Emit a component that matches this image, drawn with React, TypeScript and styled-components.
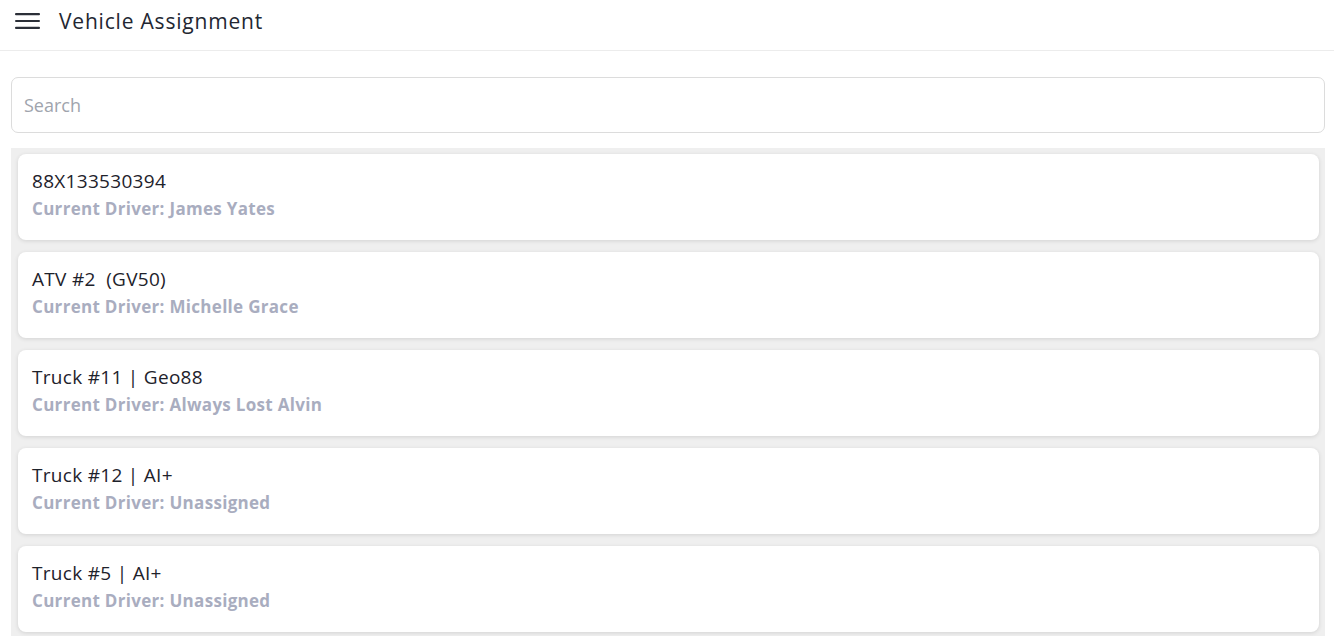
import React from "react";
import styled, { createGlobalStyle } from "styled-components";

const GlobalStyle = createGlobalStyle`
  html, body {
    margin: 0;
    padding: 0;
    background: #fff;
    font-family: 'Open Sans', 'Noto Sans', sans-serif;
  }
`;

const Page = styled.div`
  width: 1334px;
  height: 636px;
  overflow: hidden;
  background: #fff;
  display: flex;
  flex-direction: column;
`;

const Header = styled.header`
  flex-shrink: 0;
  height: 51px;
  display: flex;
  align-items: center;
  gap: 19px;
  padding: 0 15px 8px;
  border-bottom: 1px solid #ececec;
  box-sizing: border-box;
`;

const MenuButton = styled.button`
  display: flex;
  align-items: center;
  justify-content: center;
  padding: 0;
  border: none;
  background: none;
  width: 25px;
  height: 20px;
  cursor: pointer;
`;

const Title = styled.h1`
  margin: 0;
  font-size: 21px;
  font-weight: 400;
  color: #232732;
  letter-spacing: 0.8px;
`;

const Content = styled.main`
  flex-shrink: 0;
  padding: 26px 9px 0 11px;
  display: flex;
  flex-direction: column;
  gap: 15px;
`;

const SearchInput = styled.input`
  flex-shrink: 0;
  height: 56px;
  width: 100%;
  box-sizing: border-box;
  border: 1px solid #dcdcdc;
  border-radius: 7px;
  padding: 0 12px;
  font-family: inherit;
  font-size: 18px;
  color: #333;
  outline: none;
  &::placeholder {
    color: #a0a4ad;
  }
`;

const List = styled.ul`
  list-style: none;
  margin: 0;
  padding: 6px 6px 12px 7px;
  background: #efefef;
  display: flex;
  flex-direction: column;
  gap: 12px;
`;

const Card = styled.li`
  flex-shrink: 0;
  height: 86px;
  box-sizing: border-box;
  background: #fff;
  border-radius: 8px;
  box-shadow: 0 1px 4px rgba(0, 0, 0, 0.12);
  padding: 14px 14px;
  display: flex;
  flex-direction: column;
  gap: 3px;
`;

const VehicleName = styled.div`
  font-size: 19px;
  color: #1e222b;
  line-height: 27px;
  letter-spacing: 0.3px;
  white-space: pre;
`;

const DriverLine = styled.div`
  font-size: 17px;
  font-weight: 700;
  color: #a9adbf;
  line-height: 22px;
  letter-spacing: 0.3px;
`;

const vehicles = [
  { name: "88X133530394", driver: "James Yates" },
  { name: "ATV #2  (GV50)", driver: "Michelle Grace" },
  { name: "Truck #11 | Geo88", driver: "Always Lost Alvin" },
  { name: "Truck #12 | AI+", driver: "Unassigned" },
  { name: "Truck #5 | AI+", driver: "Unassigned" },
];

const App: React.FC = () => {
  return (
    <>
      <GlobalStyle />
      <Page>
        <Header>
          <MenuButton aria-label="menu">
            <svg width="25" height="16" viewBox="0 0 25 16">
              <rect x="0" y="0" width="25" height="2.2" rx="1" fill="#2b2f38" />
              <rect x="0" y="6.9" width="25" height="2.2" rx="1" fill="#2b2f38" />
              <rect x="0" y="13.8" width="25" height="2.2" rx="1" fill="#2b2f38" />
            </svg>
          </MenuButton>
          <Title>Vehicle Assignment</Title>
        </Header>
        <Content>
          <SearchInput placeholder="Search" />
          <List>
            {vehicles.map((v) => (
              <Card key={v.name}>
                <VehicleName>{v.name}</VehicleName>
                <DriverLine>Current Driver: {v.driver}</DriverLine>
              </Card>
            ))}
          </List>
        </Content>
      </Page>
    </>
  );
};

export default App;
